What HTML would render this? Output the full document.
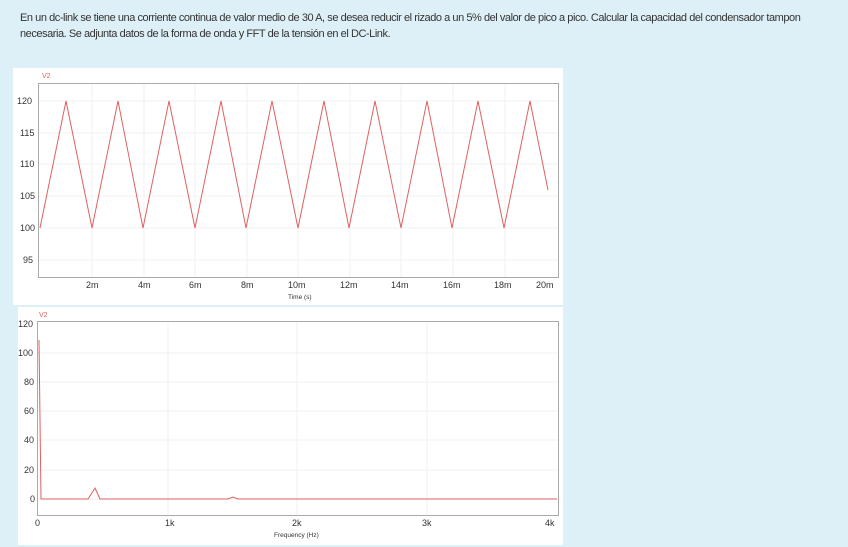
<!DOCTYPE html>
<html><head><style>
html,body{margin:0;padding:0;width:848px;height:547px;overflow:hidden;background:#def0f7;font-family:"Liberation Sans",sans-serif;}
.t{position:absolute;left:20px;font-size:11px;color:#333;letter-spacing:-0.45px;white-space:nowrap;}
</style></head><body>
<div class="t" style="top:12px">En un dc-link se tiene una corriente continua de valor medio de 30 A, se desea reducir el rizado a un 5% del valor de pico a pico. Calcular la capacidad del condensador tampon</div>
<div class="t" style="top:28px">necesaria. Se adjunta datos de la forma de onda y FFT de la tensión en el DC-Link.</div>
<svg width="848" height="547" style="position:absolute;left:0;top:0" font-family="Liberation Sans, sans-serif">
<rect x="13" y="68" width="550" height="237" fill="#fff"/>
<rect x="18" y="307" width="545" height="238" fill="#fff"/>
<g stroke="#f0f0f0" stroke-width="1">
<line x1="38" y1="101" x2="558" y2="101"/><line x1="38" y1="133" x2="558" y2="133"/><line x1="38" y1="164" x2="558" y2="164"/><line x1="38" y1="196" x2="558" y2="196"/><line x1="38" y1="228" x2="558" y2="228"/><line x1="38" y1="260" x2="558" y2="260"/>
<line x1="92" y1="83" x2="92" y2="277"/><line x1="144" y1="83" x2="144" y2="277"/><line x1="195" y1="83" x2="195" y2="277"/><line x1="247" y1="83" x2="247" y2="277"/><line x1="298" y1="83" x2="298" y2="277"/><line x1="350" y1="83" x2="350" y2="277"/><line x1="401" y1="83" x2="401" y2="277"/><line x1="453" y1="83" x2="453" y2="277"/><line x1="505" y1="83" x2="505" y2="277"/>
<line x1="37" y1="353" x2="558" y2="353"/><line x1="37" y1="382" x2="558" y2="382"/><line x1="37" y1="411" x2="558" y2="411"/><line x1="37" y1="440" x2="558" y2="440"/><line x1="37" y1="470" x2="558" y2="470"/><line x1="37" y1="499" x2="558" y2="499"/>
<line x1="168" y1="321" x2="168" y2="515"/><line x1="297" y1="321" x2="297" y2="515"/><line x1="427" y1="321" x2="427" y2="515"/>
</g>
<rect x="38.5" y="83.5" width="520" height="194" fill="none" stroke="#aaa"/>
<rect x="37.5" y="321.5" width="521" height="194" fill="none" stroke="#aaa"/>
<polyline fill="none" stroke="#e06060" stroke-width="1" points="40,228 66,101 92,228 118,101 143,228 169,101 195,228 221,101 246,228 272,101 298,228 324,101 349,228 375,101 401,228 427,101 452,228 478,101 504,228 530,101 548,190"/>
<polyline fill="none" stroke="#e06060" stroke-width="1" points="39,340 41,499 88,499 95,488 100,499 228,499 233,497 238,499 557,499"/>
<g font-size="9" fill="#333">
<text x="17" y="104">120</text><text x="20" y="136">115</text><text x="20" y="167">110</text><text x="20" y="199">105</text><text x="20" y="231">100</text><text x="23" y="263">95</text>
<text x="86" y="288">2m</text><text x="138" y="288">4m</text><text x="189" y="288">6m</text><text x="241" y="288">8m</text><text x="288" y="288">10m</text><text x="340" y="288">12m</text><text x="391" y="288">14m</text><text x="443" y="288">16m</text><text x="494" y="288">18m</text><text x="536" y="288">20m</text>
<text x="18" y="327">120</text><text x="18" y="356">100</text><text x="24" y="385">80</text><text x="24" y="414">60</text><text x="24" y="443">40</text><text x="24" y="473">20</text><text x="30" y="502">0</text>
<text x="35" y="526">0</text><text x="165" y="526">1k</text><text x="292" y="526">2k</text><text x="422" y="526">3k</text><text x="545" y="526">4k</text>
</g>
<g font-size="6.5" fill="#333"><text x="288" y="299">Time (s)</text><text x="274" y="537">Frequency (Hz)</text></g>
<g font-size="7" fill="#e06060"><text x="42" y="78">V2</text><text x="39" y="317">V2</text></g>
</svg>
</body></html>
